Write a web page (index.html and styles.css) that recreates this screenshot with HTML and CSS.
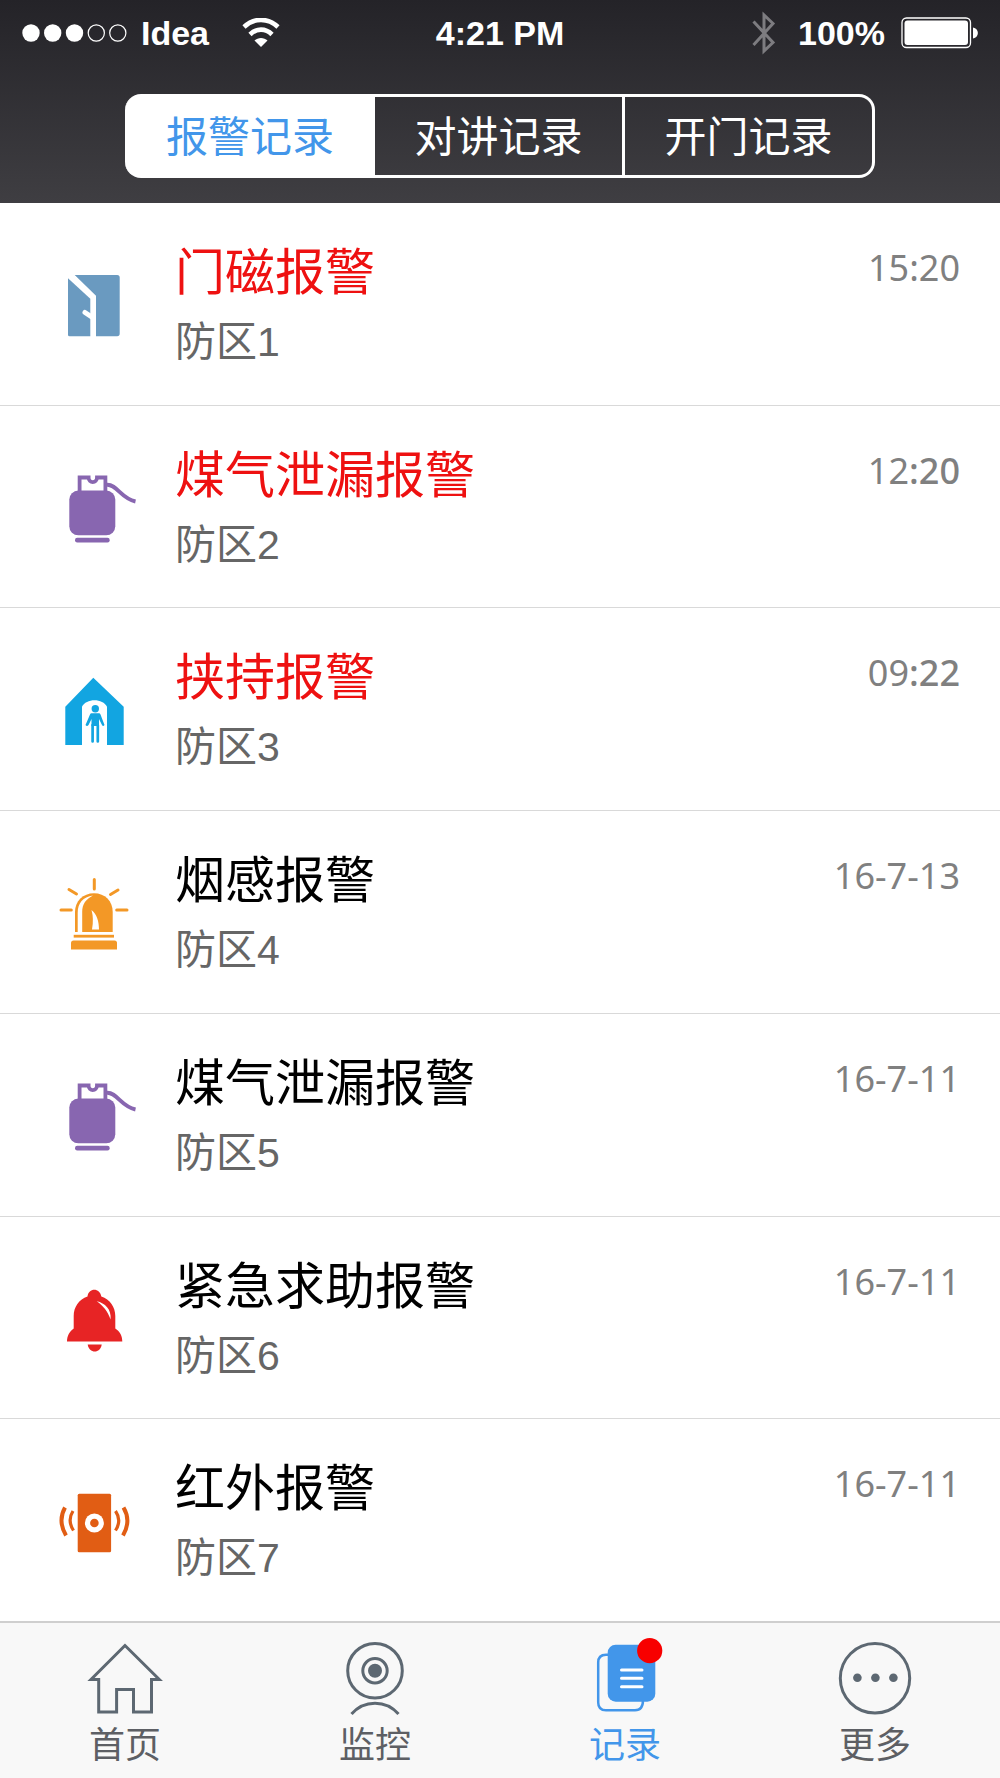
FILE: index.html
```html
<!DOCTYPE html>
<html lang="zh-CN">
<head>
<meta charset="utf-8">
<meta name="viewport" content="width=device-width, initial-scale=1">
<title>报警记录</title>
<link rel="stylesheet" href="styles.css">
</head>
<body>
<svg class="defs" aria-hidden="true">
  <symbol id="gas" viewBox="0 0 80 80">
    <rect x="15.3" y="23.6" width="46" height="44.7" rx="9"/>
    <rect x="21" y="70.8" width="34.7" height="4.6" rx="2.2"/>
    <path d="M25.6 26V10.5H34.6C34.6 16.6 43 16.6 43 10.5H51.4V26" fill="none" stroke="currentColor" stroke-width="3.8"/>
    <path d="M53 17.8C63 17.5 67 31.5 81.5 34.5" fill="none" stroke="currentColor" stroke-width="4"/>
  </symbol>
</svg>
<div class="app">
  <header class="header">
    <div class="status">
      <div class="status-left">
        <svg class="signal" viewBox="0 0 105 20" aria-hidden="true">
          <g fill="#fff"><circle cx="9" cy="10" r="8.7"/><circle cx="30.7" cy="10" r="8.7"/><circle cx="52.5" cy="10" r="8.7"/></g>
          <g fill="none" stroke="#fff" stroke-width="1.2"><circle cx="74.3" cy="10" r="8.1"/><circle cx="95.8" cy="10" r="8.1"/></g>
        </svg>
        <span class="carrier">Idea</span>
        <svg class="wifi" viewBox="0 0 38 30" aria-hidden="true">
          <g fill="none" stroke="#fff"><path d="M2 9C12-.5 26-.5 36 9" stroke-width="4.6"/><path d="M8 16.5C14.500 10 23.500 10 30 16.500" stroke-width="4.6"/></g>
          <path d="M12.500 22.500C16 19 22 19 25.500 22.500L19 29Z" fill="#fff"/>
        </svg>
      </div>
      <span class="clock">4:21 PM</span>
      <div class="status-right">
        <svg class="bluetooth" viewBox="0 0 24 44" aria-hidden="true"><path d="M1.500 10.500L21 31.500L12 40V4L21 12.500L1.500 34" fill="none" stroke="#7d7c80" stroke-width="3"/></svg>
        <span>100%</span>
        <svg class="battery" viewBox="0 0 77 32" aria-hidden="true">
          <rect x="1" y="1" width="68.500" height="29.500" rx="4.500" fill="none" stroke="#fff" stroke-width="1.300"/>
          <rect x="3.500" y="3.500" width="63.500" height="24.500" rx="3" fill="#fff"/>
          <path d="M72 10.500C78.500 11.500 78.500 20.500 72 21.500Z" fill="#fff"/>
        </svg>
      </div>
    </div>
    <nav class="segments" aria-label="记录类型">
      <button class="segment segment-active" type="button">报警记录</button>
      <button class="segment" type="button">对讲记录</button>
      <button class="segment" type="button">开门记录</button>
    </nav>
  </header>

  <ul class="list">
    <li class="row">
      <svg class="icon blue" viewBox="0 0 80 80" aria-hidden="true">
        <path d="M20.700 11H63.200Q65.700 11 65.700 13.500V69.500Q65.700 72.300 63.200 72.300H42V31.700Z"/>
        <path d="M14 14.300L36.300 34.700V72.300H15.500Q14 72.300 14 70.800Z"/>
        <path d="M31 48.500L37 52.500" stroke="#fff" stroke-width="5" stroke-linecap="round"/>
      </svg>
      <div class="info"><h2 class="title alert">门磁报警</h2><p class="zone">防区1</p></div>
      <time class="time">15:20</time>
    </li>
    <li class="row">
      <svg class="icon purple" aria-hidden="true"><use href="#gas"/></svg>
      <div class="info"><h2 class="title alert">煤气泄漏报警</h2><p class="zone">防区2</p></div>
      <time class="time">12<span class="strong">:20</span></time>
    </li>
    <li class="row">
      <svg class="icon sky" viewBox="0 0 80 80" aria-hidden="true">
        <path d="M39.300 8.700L69.700 37.700V76H53V37.700C49 29 32 29 28 37.700V76H11.300V37.700Z"/>
        <circle cx="41.300" cy="39.700" r="3.700"/>
        <path d="M37.500 44.300H45Q46 44.300 46.500 45.500L50.500 56Q49 58 48 56L45 50V57H37.500V50L34.500 56Q33 58 31.500 56L36 45.500Q36.500 44.300 37.500 44.300Z"/>
        <path d="M38.600 56V72.500M43.800 56V72.500" stroke="currentColor" stroke-width="2.700" stroke-linecap="round"/>
      </svg>
      <div class="info"><h2 class="title alert">挟持报警</h2><p class="zone">防区3</p></div>
      <time class="time">09<span class="strong">:22</span></time>
    </li>
    <li class="row">
      <svg class="icon amber" viewBox="0 0 80 80" aria-hidden="true">
        <path d="M40.300 7.500V17M15 17.500L22.500 22M64 18L56.500 22.500M7 38H17.300M62.700 38H73" stroke="currentColor" stroke-width="3" stroke-linecap="round"/>
        <path d="M21 60V40C21 29 29 21.200 40 21.200S58.700 29 58.700 40V60Z"/>
        <path d="M23.700 61V41C23.700 31 29 25 39 23.500C32 27 28.200 32 28.200 40V61Z" fill="#fff"/>
        <path d="M37.500 38C43 42 45 50 45 57.500H38Q40 47 37.500 38Z" fill="#fff"/>
        <rect x="19.700" y="62.800" width="40.300" height="2.800"/>
        <path d="M17 77.500V71Q17 68.500 19.500 68.500H60.500Q63 68.500 63 71V77.500Z"/>
      </svg>
      <div class="info"><h2 class="title">烟感报警</h2><p class="zone">防区4</p></div>
      <time class="time">16-7-13</time>
    </li>
    <li class="row">
      <svg class="icon purple" aria-hidden="true"><use href="#gas"/></svg>
      <div class="info"><h2 class="title">煤气泄漏报警</h2><p class="zone">防区5</p></div>
      <time class="time">16-7-11</time>
    </li>
    <li class="row">
      <svg class="icon red" viewBox="0 0 80 80" aria-hidden="true">
        <path d="M33.500 18.500C34.500 9.500 46 9.500 47.300 18.500C56 21.500 61.300 29 61.300 38V50.500C66 53.500 68.300 58 68.300 63.400H13C13 58 15.500 53.500 19.700 50.500V38C19.700 29 25 21.500 33.500 18.500Z"/>
        <path d="M33.700 66.400H47.700C46.500 75.800 35 75.800 33.700 66.400Z"/>
        <path d="M42.700 23.200C51 25 57.500 31 56.600 41.500C53.500 33 49.500 28 42.700 23.200Z" fill="#fff"/>
      </svg>
      <div class="info"><h2 class="title">紧急求助报警</h2><p class="zone">防区6</p></div>
      <time class="time">16-7-11</time>
    </li>
    <li class="row">
      <svg class="icon orange" viewBox="0 0 80 80" aria-hidden="true">
        <rect x="23.700" y="13.700" width="33.400" height="58.600" rx="1.500"/>
        <circle cx="40.400" cy="43" r="9.500" fill="#fff"/><circle cx="40.400" cy="43" r="4.300"/>
        <g fill="none" stroke="currentColor"><path d="M19 31Q13 40.500 19.500 50.500M61.500 31Q68 40.500 61.500 50.500" stroke-width="3.200"/><path d="M11 27.500Q3.500 41 12 55.500M69.500 27.500Q77.500 41 69 55.500" stroke-width="4"/></g>
      </svg>
      <div class="info"><h2 class="title">红外报警</h2><p class="zone">防区7</p></div>
      <time class="time">16-7-11</time>
    </li>
  </ul>

  <nav class="tabs" aria-label="主导航">
    <a class="tab" href="#home">
      <svg class="tab-icon" viewBox="0 0 80 80" aria-hidden="true"><path d="M40 6.500L6 40.500H13.700V73H31.600V50.500H48.500V73H66.500V40.500H74.300Z"/></svg>
      <span>首页</span>
    </a>
    <a class="tab" href="#monitor">
      <svg class="tab-icon" viewBox="0 0 80 80" aria-hidden="true"><circle cx="40" cy="31.700" r="27.300"/><circle cx="40" cy="31.700" r="12.200"/><circle class="dot" cx="40" cy="31.700" r="7"/><path d="M16.500 75C29 60.500 51 60.500 63.500 75"/></svg>
      <span>监控</span>
    </a>
    <a class="tab tab-active" href="#records" aria-current="page">
      <svg class="tab-icon" viewBox="0 0 80 80" aria-hidden="true">
        <path d="M24 15.700H21Q13.200 15.700 13.200 23.500V63.500Q13.200 71.300 21 71.300H50Q58 71.300 58 61" stroke-width="2.500"/>
        <rect class="dot" x="22.700" y="5.700" width="47.600" height="57" rx="8"/>
        <path d="M36.500 31H57M36.500 39.300H57M36.500 47.700H57" stroke="#fff" stroke-linecap="round"/>
        <circle cx="64.700" cy="11.700" r="12.600" fill="#f80000" stroke="none"/>
      </svg>
      <span>记录</span>
    </a>
    <a class="tab" href="#more">
      <svg class="tab-icon" viewBox="0 0 80 80" aria-hidden="true"><circle cx="40" cy="39.300" r="34.700"/><g class="dot"><circle cx="22.400" cy="38.700" r="4.300"/><circle cx="40.400" cy="38.700" r="4.300"/><circle cx="58.400" cy="38.700" r="4.300"/></g></svg>
      <span>更多</span>
    </a>
  </nav>
</div>
</body>
</html>
```
FILE: styles.css
```css
* { box-sizing: border-box; }

body {
  margin: 0;
  background: #fff;
  font-family: "Liberation Sans", "Noto Sans CJK SC", sans-serif;
}

h2, p, ul { margin: 0; padding: 0; font-weight: 400; }

.defs { display: none; }

.app {
  display: flex;
  flex-direction: column;
  min-height: 100vh;
}

.header {
  padding-bottom: 25px;
  background: linear-gradient(#242328, #3f3e42);
  color: #fff;
}

.status {
  display: grid;
  grid-template-columns: 1fr auto 1fr;
  align-items: center;
  height: 66px;
  padding: 0 22px;
  font-size: 34px;
  font-weight: 700;
}

.status-left, .status-right { display: flex; align-items: center; }
.status-right { justify-content: flex-end; }
.signal { width: 105px; height: 20px; }
.carrier { padding: 0 33px 0 14px; }
.wifi { width: 38px; height: 30px; }
.bluetooth { width: 24px; height: 44px; margin-right: 22px; }
.battery { width: 77px; height: 32px; margin-left: 16px; }

.segments {
  display: grid;
  grid-template-columns: repeat(3, 1fr);
  width: 75%;
  height: 84px;
  margin: 28px auto 0;
}

.segment {
  padding: 0 0 6px;
  border: 3px solid #fff;
  border-left-width: 0;
  background: none;
  color: #fff;
  font-family: inherit;
  font-size: 42px;
}

.segment:first-child { border-radius: 16px 0 0 16px; }
.segment:last-child { border-radius: 0 16px 16px 0; }

.segment-active {
  border-right-width: 0;
  background: #fff;
  color: #4296ea;
}

.list {
  display: flex;
  flex: 1;
  flex-direction: column;
  list-style: none;
}

.row {
  display: flex;
  flex: 1;
  align-items: flex-start;
  padding: 40px 40px 0 54px;
  border-bottom: 1px solid #d9d9d9;
}

.row:last-child { border-bottom: 0; }

.icon {
  flex: none;
  width: 80px;
  height: 80px;
  margin: 21px 41px 0 0;
  overflow: visible;
  fill: currentColor;
}

.icon use, symbol { overflow: visible; }

.blue { color: #6a9ac0; }
.purple { color: #8866b0; }
.sky { color: #12a5e1; }
.amber { color: #f39826; }
.red { color: #e72425; }
.orange { color: #e15d14; }

.info { flex: 1; }

.title {
  margin-bottom: 14px;
  color: #000;
  font-size: 50px;
  line-height: 60px;
}

.alert { color: #ee1111; }

.zone {
  padding-bottom: 24px;
  color: #666;
  font-size: 41px;
  line-height: 50px;
}

.time {
  color: #808080;
  font-family: "Noto Sans", sans-serif;
  font-size: 36px;
  line-height: 50px;
}

.strong { font-weight: 500; }

.tabs {
  display: grid;
  grid-template-columns: repeat(4, 1fr);
  padding: 16px 0 12px;
  border-top: 2px solid #cfcfcf;
  background: #f8f8f8;
}

.tab {
  display: flex;
  flex-direction: column;
  align-items: center;
  gap: 7px;
  color: #5d5f64;
  font-size: 36px;
  line-height: 40px;
  text-decoration: none;
}

.tab-icon {
  width: 80px;
  height: 80px;
  overflow: visible;
  fill: none;
  stroke: #5d6872;
  stroke-width: 3;
}

.dot { fill: #5d6872; stroke: none; }

.tab-active { color: #4296ea; }
.tab-active .tab-icon { stroke: #4296ea; }
.tab-active .dot { fill: #4296ea; }
```
